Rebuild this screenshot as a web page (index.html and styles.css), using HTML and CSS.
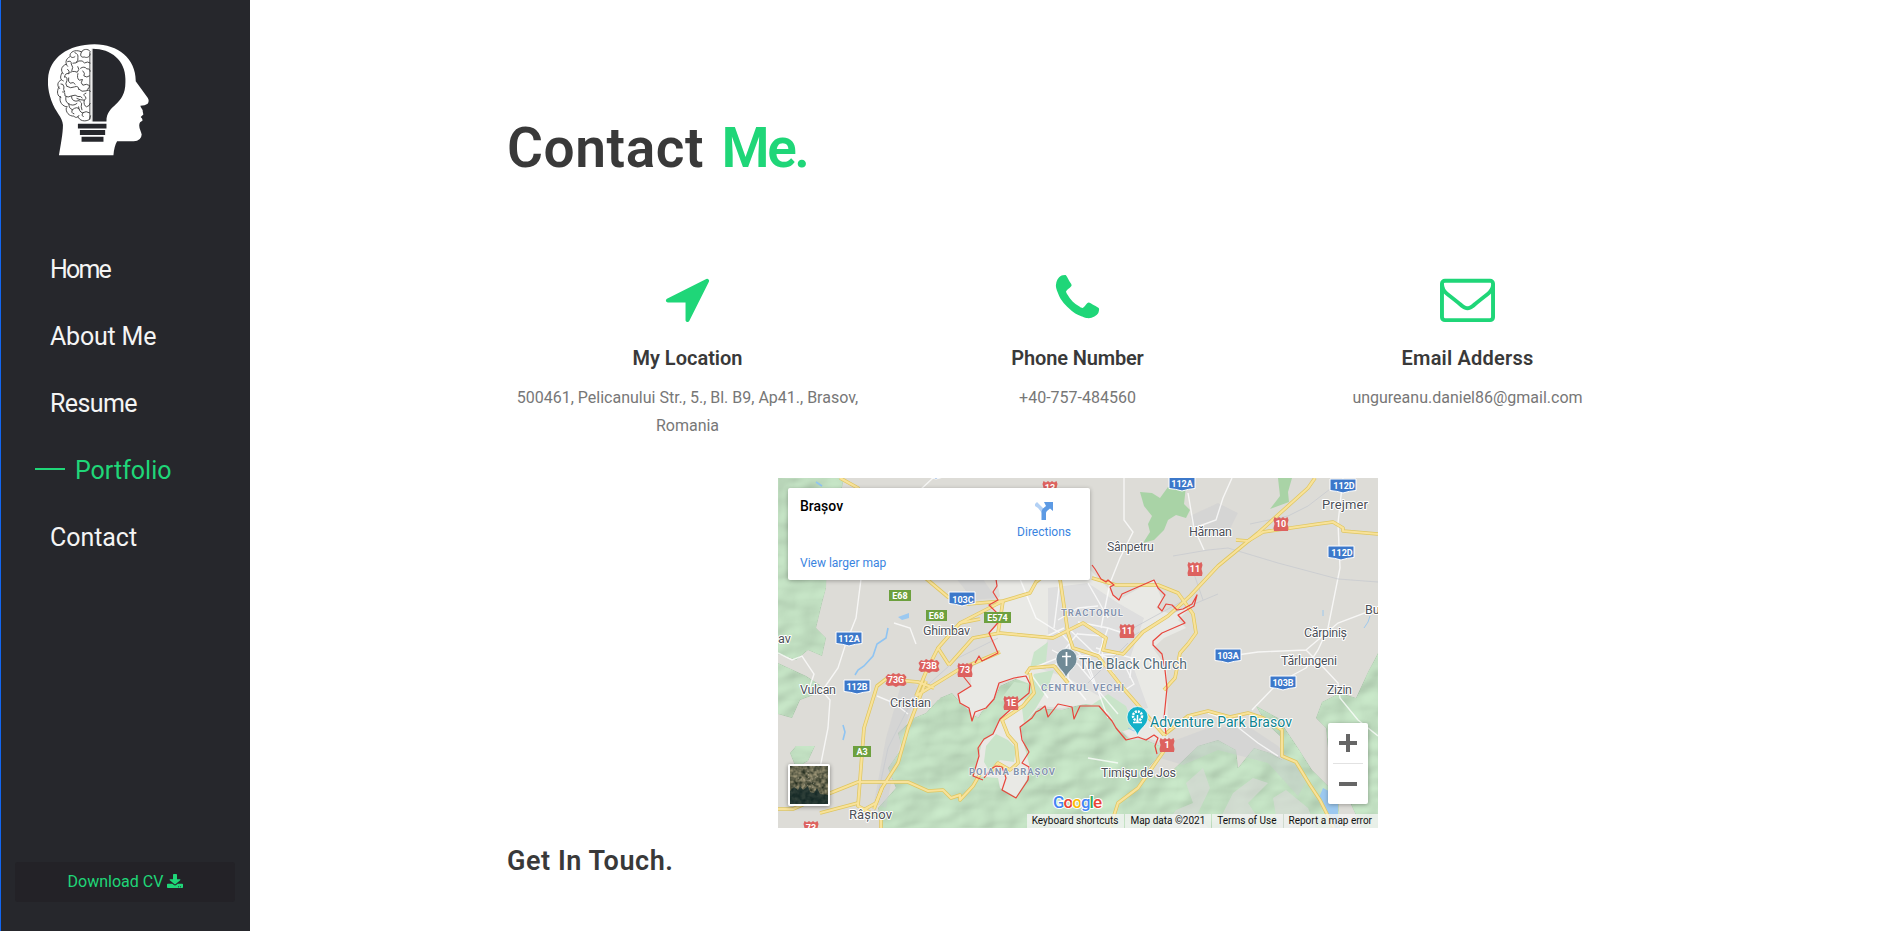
FILE: index.html
```html
<!DOCTYPE html>
<html lang="en">
<head>
<meta charset="utf-8">
<title>Contact Me</title>
<link rel="stylesheet" href="styles.css">
</head>
<body>
<aside class="sidebar">
  <svg class="logo" viewBox="144 131 304 335">
    <path fill="#fff" d="M177 465C182 435 189 400 189 374C188 350 166 335 154 300C144 272 143 250 144 235C148 172 204 131 284 131C356 131 409 176 408 242L444 292Q450 301 444 310Q436 316 422 316C423 324 431 328 429 332L431 342L423 350Q430 356 428 361Q418 366 419 372C417 382 424 392 426 402Q425 421 402 423L352 423Q343 438 341 465Z"/>
    <path fill="#26272c" d="M278 144C334 144 377 179 377 235V245C377 318 320 309 320 363H278ZM234 370H320V384H234ZM240 389H316V404H240ZM245 409H311V424H245Z"/>
    <path stroke="#aaa" stroke-width="1" d="M276 144V363"/>
    <g fill="none" stroke="#333" stroke-width="2.6" stroke-linecap="round">
      <path d="M271 152C264 142 248 146 245 154C233 147 214 149 210 163C212 171 219 173 225 168M210 168C196 175 195 188 203 197M198 191C183 197 181 210 190 220M186 217C179 230 181 238 190 241M184 238C172 243 170 256 179 264M177 259C169 274 172 287 183 291M181 288C176 304 188 319 202 319M199 322C196 335 208 348 222 347C229 355 235 349 237 345M234 348C238 362 256 365 269 357L272 346"/>
      <path d="M245 154C239 163 243 172 253 169C263 173 270 168 271 160M225 156Q236 160 234 171Q236 180 230 184M203 183Q215 178 214 190Q222 200 216 210M219 188Q229 189 237 181Q248 178 254 187Q263 181 271 187M203 206Q211 211 206 219Q195 217 194 229M206 219Q217 208 232 215Q241 207 234 198M234 219Q230 233 238 239L247 237M242 203Q253 195 261 205Q270 203 271 212M249 211Q257 218 252 226Q261 233 269 226M194 229Q203 228 201 240Q194 250 201 258M206 232Q203 244 211 248Q221 242 226 251M183 250Q191 249 192 259Q189 267 194 274M202 258Q212 265 224 259Q236 254 237 267M247 238Q240 248 249 254Q260 248 269 255Q270 263 262 267M237 266Q246 276 258 271Q267 266 272 272M188 274Q196 273 195 286Q204 293 215 286Q227 281 234 288Q243 286 247 292M198 289Q195 304 205 309Q219 319 231 309M215 288Q214 300 228 302Q239 296 244 306M258 278Q247 281 256 288Q263 294 253 299Q240 299 231 294M253 299Q250 315 260 319Q269 317 271 309M206 310Q206 324 217 328Q232 316 238 326M217 328Q212 338 222 340M236 319Q238 335 248 337Q259 330 269 337M245 309Q242 319 246 328M249 337Q242 345 250 349M270 154V356"/>
    </g>
  </svg>
  <nav class="menu">
    <a class="home">Home</a>
    <a class="about">About Me</a>
    <a class="resume">Resume</a>
    <a class="active">Portfolio</a>
    <a class="contact">Contact</a>
  </nav>
  <a class="download">Download CV
    <svg viewBox="0 0 512 512" preserveAspectRatio="none"><path fill="#1fd678" d="M216 0h80c13 0 24 11 24 24v168h88c18 0 27 21 14 34L270 378c-8 8-20 8-28 0L90 226c-13-13-4-34 14-34h88V24c0-13 11-24 24-24zm296 376v112c0 13-11 24-24 24H24c-13 0-24-11-24-24V376c0-13 11-24 24-24h147l49 49c20 20 52 20 72 0l49-49h147c13 0 24 11 24 24zm-124 88c0-11-9-20-20-20s-20 9-20 20 9 20 20 20 20-9 20-20zm64 0c0-11-9-20-20-20s-20 9-20 20 9 20 20 20 20-9 20-20z"/></svg>
  </a>
</aside>
<main class="content">
  <h1>Contact <span>Me.</span></h1>
  <section class="cards">
    <article>
      <svg class="icon" viewBox="0 0 1792 1792"><path d="M1593 349l-640 1280q-17 35-57 35-5 0-15-2-22-5-35.5-22.500t-13.500-39.500v-576h-576q-22 0-39.500-13.500t-22.500-35.500 4-42 29-30l1280-640q13-7 29-7 27 0 45 19 15 14 18.500 34.500t-6.500 39.500z"/></svg>
      <h2 class="t-loc">My Location</h2>
      <p>500461, Pelicanului Str., 5., Bl. B9, Ap41., Brasov, Romania</p>
    </article>
    <article>
      <svg class="icon" viewBox="0 0 1792 1792"><path d="M1600 1240q0 27-10 70.500t-21 68.500q-21 50-122 106-94 51-186 51-27 0-53-3.500t-57.500-12.500-47-14.500-55.500-20.500-49-18q-98-35-175-83-127-79-264-216t-216-264q-48-77-83-175-3-9-18-49t-20.500-55.500-14.500-47-12.500-57.500-3.500-53q0-92 51-186 56-101 106-122 25-11 68.500-21t70.500-10q14 0 21 3 18 6 53 76 11 19 30 54t35 63.500 31 53.500q3 4 17.500 25t21.500 35.500 7 28.500q0 20-28.500 50t-62 55-62 53-28.500 46q0 9 5 22.500t8.500 20.500 14 24 11.500 19q76 137 174 235t235 174q2 1 19 11.500t24 14 20.500 8.500 22.500 5q18 0 46-28.500t53-62 55-62 50-28.500q14 0 28.500 7t35.500 21.500 25 17.500q25 15 53.500 31t63.500 35 54 30q70 35 76 53 3 7 3 21z"/></svg>
      <h2 class="t-phone">Phone Number</h2>
      <p>+40-757-484560</p>
    </article>
    <article>
      <svg class="icon" viewBox="0 0 1792 1792"><path d="M1664 1504v-768q-32 36-69 66-268 206-426 338-51 43-83 67t-86.500 48.500-102.500 24.500h-2q-48 0-102.500-24.500t-86.500-48.500-83-67q-158-132-426-338-37-30-69-66v768q0 13 9.500 22.500t22.500 9.500h1472q13 0 22.500-9.500t9.500-22.500zm0-1051v-24.500l-.5-13-3-12.500-5.500-9-9-7.500-14-2.500h-1472q-13 0-22.500 9.500t-9.500 22.500q0 168 147 284 193 152 401 317 6 5 35 29.500t46 37.500 44.500 31.500 50.500 27.500 43 9h2q20 0 43-9t50.500-27.500 44.500-31.500 46-37.500 35-29.500q208-165 401-317 54-43 100.500-115.500t46.500-131.500zm128-37v1088q0 66-47 113t-113 47h-1472q-66 0-113-47t-47-113v-1088q0-66 47-113t113-47h1472q66 0 113 47t47 113z"/></svg>
      <h2 class="t-mail">Email Adderss</h2>
      <p>ungureanu.daniel86@gmail.com</p>
    </article>
  </section>
  <div class="map">
    <svg class="map-canvas" viewBox="0 0 600 350">
      <defs>
        <path id="shield" d="M-6.500-7L-4-5.500L-2-7L0-5.500L2-7L4-5.500L6.500-7L7.500-4L6.500 0L7.500 4L7 7H-7L-7.500 4L-6.500 0L-7.500-4Z"/>
        <path id="shield-wide" d="M-8-6L-5-5L-3-7L0-5.500L3-7L5-5L8-6L10.500-3L9 0L10.500 4L8 6L3 5.500L0 7L-3 5.500L-8 6L-10.500 4L-9 0L-10.500-3Z"/>
        <path id="county" d="M-13-7H13V4.500Q6 5 0 7Q-6 5-13 4.500Z"/>
        <filter id="relief" x="0" y="0" width="100%" height="100%" color-interpolation-filters="sRGB">
          <feTurbulence type="fractalNoise" baseFrequency=".03 .045" numOctaves="2" seed="4" result="n"/>
          <feDiffuseLighting in="n" surfaceScale="4" lighting-color="#fff" result="l"><feDistantLight azimuth="220" elevation="52"/></feDiffuseLighting>
          <feComposite in="SourceGraphic" in2="l" operator="arithmetic" k1=".36" k2=".71"/>
        </filter>
        <filter id="terrain" x="0" y="0" width="100%" height="100%" color-interpolation-filters="sRGB">
          <feTurbulence type="fractalNoise" baseFrequency=".25" numOctaves="3" seed="9"/>
          <feColorMatrix values=".7 0 0 0 .05  .6 0 0 0 .1  .5 0 0 0 .06  0 0 0 0 1"/>
        </filter>
      </defs>
      <rect width="600" height="350" fill="#dddcd7"/>
      <!-- forest and hills -->
      <g fill="#c1dfc1" filter="url(#relief)">
        <path d="M0 0H66L62 18L50 30L48 110L44 125L38 150L48 160L44 178L30 172L18 182L0 176ZM0 185L28 198L42 207L38 216L22 222L14 240L0 236ZM12 275L18 268L37 268L30 283L18 290Z"/>
        <path d="M105 350L100 330L118 310L110 290L124 270L120 255L136 240L148 235L160 222L176 218L190 232L200 240L206 230L216 222L222 208L240 200L254 198L256 210L254 230L284 232L308 225H325L336 240L342 252L352 262H368L382 268L384 274L370 290L378 300L395 292L420 268L440 262L458 272L460 290L476 270L492 275L505 282L502 258L488 245L478 228L500 240L520 270L534 292L560 318L562 350Z"/>
        <path d="M600 175L590 194L578 220L562 215L544 224L538 240L548 250L550 270L556 300L570 320L584 350H600Z"/>
        <path d="M162 220L174 215L180 222L173 232L160 230Z"/>
      </g>
      <path fill="#d9d9d7" d="M385 350L398 332L415 325L408 305L425 290L432 310L420 335L430 350ZM440 345L455 315L475 300L490 305L470 325L480 340ZM500 350L495 320L508 312L530 330L538 350Z" opacity=".65"/>
      <path fill="#a9d3a6" d="M362 14L374 15L382 20L390 9L408 8L406 26L412 32L408 40L398 37L390 42L386 52L376 62L365 65L372 54L370 46L374 38L366 28ZM500 0H514L510 14L511 24L492 31L502 18ZM319 150H328V154H319Z"/>
      <path fill="#cacbd0" opacity=".4" d="M390 265L430 250L470 248L500 268L530 300L520 318L490 285L440 272L405 287L376 278ZM96 325L108 260L125 200L140 208L118 280L108 330ZM178 100L200 94L218 120L195 122ZM412 38L440 25L460 35L450 55L420 60Z"/>
      <!-- city area -->
      <path fill="#e9e9e5" d="M218 100L222 118L212 130L224 140L211 155L220 175L203 184L192 190L193 208L180 216L182 225L191 230L194 240L208 230L216 221L221 205L236 200L252 206L250 220L240 224L222 241L215 256L204 264L196 298L220 300L222 310L238 319L250 300L252 290L242 250L262 228L284 230L308 226L322 228L336 244L352 260L370 260L390 268L389 190L375 170L386 160L408 150L400 142L416 126L392 136L378 130L384 122L376 102L340 122L330 110L310 90Z"/>
      <path fill="#d9dadb" opacity=".75" d="M270 110L310 105L340 125L366 140L352 180L370 230L350 235L290 200L260 190L270 160Z"/>
      <path fill="#c9e4c9" d="M208 268L218 256L230 262L238 270L236 284L222 282L212 294L206 284ZM222 222L236 204L250 206L248 220L234 226ZM256 174L270 164L268 184L252 190ZM244 230L256 196L276 192L270 210L258 230L246 246ZM312 228L330 216L348 228L356 250L342 254L330 234Z"/>
      <!-- water -->
      <path fill="#9cc9f0" d="M545 310L560 318V350H555L540 322ZM120 139L131 135V140L124 142Z"/>
      <g fill="none" stroke="#8fc4f2" stroke-width="1.600"><path d="M110 150L108 160L99 166L95 178L86 188L80 192L77 197M65 247L67 254L65 262M38 4L44 8"/><path stroke-width=".8" d="M350 250L356 253L364 250M592 138L590 144L586 150M545 132V138"/></g>
      <!-- minor roads -->
      <g fill="none" stroke="#fff" stroke-width="1.400" opacity=".75">
        <path d="M155 0L142 12M83 101L78 140L68 165L60 190L44 213L52 222L50 250L42 290M0 175L14 182L24 178L36 196L30 214M346 0V42L355 54L342 80L332 105L323 150M410 15L416 50L438 42L445 20L454 0M416 50L426 72M565 0L560 45L562 90L550 150L540 172L528 190M438 180L480 174L528 172L546 190L560 205L562 220L580 242L600 258M528 172L560 145L600 130M528 190L500 205L474 232M430 235L452 243L480 265L500 278M300 155L280 180L250 192L270 220M242 101L258 140L282 155M282 101L276 150M292 166L290 200L308 222M308 180L330 240M318 176L350 216M300 144L330 150L354 158M265 160L286 150M318 170L354 180L352 200M310 105L330 140M116 145L132 150L138 166M99 218L116 225L130 236M310 280L340 285"/>
        <path d="M284 156L305 180L318 210L340 236M290 150L315 174L350 188M274 172L300 186L320 210M300 156L325 158L324 188M268 190L300 178L340 176M330 150L320 178L336 196M280 142L300 130L320 128M346 186L356 206L344 214"/>
      </g>
      <path fill="none" stroke="#c8cacf" stroke-width=".8" d="M600 104L560 101L500 85L450 70L430 72L395 78M96 335L110 270L135 220L180 180L220 160M355 158L390 137L440 116M348 154L410 120M310 205L350 165M414 90L425 122M472 46L510 38L530 28L556 8"/>
      <!-- major roads -->
      <g fill="none" stroke="#dfc65f" stroke-width="3.600" stroke-linejoin="round">
        <path d="M62 0L80 10L110 82L145 98L170 119L190 126L225 123L252 115L258 104L278 88M0 331H15L40 320L80 304H130L150 313L165 312L173 320L182 317V322L195 308L202 296M171 187L195 160L222 155L275 160L305 145L328 160L325 172L345 176L365 154L390 138L412 118L440 88L480 55L530 10L537 0M171 187L160 170L182 145L202 141M80 335L98 325L104 310M42 335L80 325"/>
        <path d="M96 331L104 310L120 285L130 250L148 203M103 350V340L80 328L86 250L99 208L108 201L140 204L156 210M138 218L148 194L160 170M138 218L180 192L222 174M314 100L338 107L380 107L400 115L415 136L418 155L410 166L402 175L397 200L386 212M458 62L470 63L485 54L540 46L555 44L565 50V53L600 56"/>
        <path d="M386 257L410 238L430 233L452 239L470 235L485 240L504 252V278L518 284L532 307L542 322L556 350M386 257L345 210L320 178L295 170L290 155L282 101M388 270L360 310L340 325L332 350M248 196L252 190L276 188L290 205M252 195L256 215L245 228L224 242L230 257L238 266L240 285L232 292L220 285L213 294M225 123L220 155M182 145L225 123"/>
      </g>
      <g fill="none" stroke="#f8e29a" stroke-width="2.200" stroke-linejoin="round">
        <path d="M62 0L80 10L110 82L145 98L170 119L190 126L225 123L252 115L258 104L278 88M0 331H15L40 320L80 304H130L150 313L165 312L173 320L182 317V322L195 308L202 296M171 187L195 160L222 155L275 160L305 145L328 160L325 172L345 176L365 154L390 138L412 118L440 88L480 55L530 10L537 0M171 187L160 170L182 145L202 141M80 335L98 325L104 310M42 335L80 325"/>
        <path d="M96 331L104 310L120 285L130 250L148 203M103 350V340L80 328L86 250L99 208L108 201L140 204L156 210M138 218L148 194L160 170M138 218L180 192L222 174M314 100L338 107L380 107L400 115L415 136L418 155L410 166L402 175L397 200L386 212M458 62L470 63L485 54L540 46L555 44L565 50V53L600 56"/>
        <path d="M386 257L410 238L430 233L452 239L470 235L485 240L504 252V278L518 284L532 307L542 322L556 350M386 257L345 210L320 178L295 170L290 155L282 101M388 270L360 310L340 325L332 350M248 196L252 190L276 188L290 205M252 195L256 215L245 228L224 242L230 257L238 266L240 285L232 292L220 285L213 294M225 123L220 155M182 145L225 123"/>
      </g>
      <!-- city limits -->
      <path fill="none" stroke="#e8453c" stroke-width="1.200" stroke-linejoin="round" d="M314 87L317 91L323 101L328 104L330 102L336 107L332 109L335 117L341 122L344 116L376 102L380 110L387 117L384 122L380 129L384 133L388 126L394 127L399 132L405 131L414 126L419 117L416 128L400 137L407 145L384 155L375 163L375 167L384 176L387 192L389 210L386 240L388 256M218 101L219 108L215 114L220 122L211 127L224 140L211 155L220 175L204 183L201 178L197 185M185 198L193 208L180 216L182 225L191 230L194 243L197 234L208 230L216 221L221 205L236 200L248 198L252 206L251 215L240 224L232 232L222 241L215 256L206 261L200 270L201 278L195 298L205 302M206 300L213 291L218 288L224 289L228 300L224 312L238 320L250 302L251 289L244 285L251 274L244 262L242 249L254 240L258 234L262 232L267 228L270 239L280 226L294 229L296 241L302 228H321L334 243L338 250L348 262L360 259L368 262L376 257L380 260L377 268L379 276"/>
      <!-- road signs -->
      <g class="signs">
        <g fill="#dd625f">
          <use href="#shield" x="272" y="10"/><use href="#shield" x="417" y="91"/><use href="#shield" x="503" y="46"/><use href="#shield" x="349" y="153"/><use href="#shield-wide" x="151" y="188"/><use href="#shield-wide" x="118" y="202"/><use href="#shield" x="187" y="192"/><use href="#shield" x="233" y="225"/><use href="#shield" x="389" y="267"/><use href="#shield" x="33" y="350"/>
        </g>
        <g fill="#3c78ca" stroke="#fff">
          <use href="#county" x="404" y="6"/><use href="#county" x="565" y="8"/><use href="#county" x="563" y="75"/><use href="#county" x="184" y="121"/><use href="#county" x="71" y="161"/><use href="#county" x="79" y="209"/><use href="#county" x="450" y="178"/><use href="#county" x="505" y="205"/><use href="#county" x="158" y="-6"/>
        </g>
        <path fill="#6da03e" d="M111 112H133V123H111ZM148 132H169V143H148ZM206 134H233V145H206ZM75 268H93V279H75Z"/>
        <g class="sign-text">
          <text x="272" y="13">13</text><text x="417" y="94">11</text><text x="503" y="49">10</text><text x="349" y="156">11</text><text x="151" y="191">73B</text><text x="118" y="205">73G</text><text x="187" y="195">73</text><text x="233" y="228">1E</text><text x="389" y="270">1</text><text x="33" y="353">73</text>
          <text x="404" y="9">112A</text><text x="566" y="11">112D</text><text x="564" y="78">112D</text><text x="185" y="125">103C</text><text x="71" y="164">112A</text><text x="79" y="212">112B</text><text x="450" y="181">103A</text><text x="505" y="208">103B</text>
          <text x="122" y="121">E68</text><text x="158.500" y="141">E68</text><text x="219.500" y="143">E574</text><text x="84" y="277">A3</text>
        </g>
      </g>
      <!-- place names -->
      <g class="places">
        <text x="145" y="157" textLength="47">Ghimbav</text><text x="0" y="165">av</text>
        <text x="22" y="216" textLength="36">Vulcan</text><text x="112" y="229" textLength="41">Cristian</text>
        <text x="71" y="341" font-size="13" textLength="43">Râșnov</text>
        <text x="329" y="73" textLength="47">Sânpetru</text><text x="411" y="58" textLength="43">Hărman</text>
        <text x="544" y="31" font-size="13" textLength="46">Prejmer</text><text x="526" y="159" textLength="43">Cărpiniș</text>
        <text x="587" y="136">Bu</text><text x="503" y="187" textLength="56">Tărlungeni</text>
        <text x="549" y="216" textLength="25">Zizin</text><text x="323" y="299" textLength="75">Timişu de Jos</text>
        <text class="poi" x="301" y="191" textLength="108">The Black Church</text>
        <text class="park" x="372" y="249" textLength="142">Adventure Park Brasov</text>
        <g class="district"><text x="283" y="138" textLength="62">TRACTORUL</text><text x="263" y="213" textLength="83">CENTRUL VECHI</text><text x="191" y="297" textLength="86">POIANA BRAȘOV</text></g>
      </g>
      <path fill="#6f8a96" stroke="#fff" stroke-width=".7" d="M288 200C286 192 278 190 278 181A10.300 10.300 0 0 1 299 181C299 190 290 192 288 200Z"/>
      <path stroke="#fff" stroke-width="1.700" d="M288.500 174V188M284 178.500H293"/>
      <path fill="#14b1c9" stroke="#fff" stroke-width=".7" d="M359.500 258C358 250 349 248 349 239A10.300 10.300 0 0 1 370 239C370 248 361 250 359.500 258Z"/>
      <path fill="none" stroke="#fff" stroke-width="1.500" d="M355 244.500H364M359.500 237V244"/><circle cx="359.500" cy="238" r="4.500" fill="none" stroke="#fff" stroke-width="2.500" stroke-dasharray="2 1"/>
      <text class="google" x="275" y="330" textLength="49"><tspan fill="#4285f4">G</tspan><tspan fill="#ea4335">o</tspan><tspan fill="#fbbc05">o</tspan><tspan fill="#4285f4">g</tspan><tspan fill="#34a853">l</tspan><tspan fill="#ea4335">e</tspan></text>
    </svg>
    <div class="place-card">
      <div class="place-info"><strong>Brașov</strong><a>View larger map</a></div>
      <div class="directions">
        <svg viewBox="0 0 18 18"><path fill="#b3d1f5" d="M0 2L2 0L9 7L7 11L3 6L0 4Z"/><path fill="#5c9ae4" d="M6.500 18V10Q6.500 8 8 6.500L11 4L9 0H18V9L15 6.500L12 9Q11 10 11 11V18Z"/></svg>
        <a>Directions</a>
      </div>
    </div>
    <div class="satellite"><svg viewBox="0 0 38 38"><rect width="38" height="38" filter="url(#terrain)"/><path fill="#0c2425" opacity=".75" d="M0 25L4 21L8 24L10 20L13 24L18 20L20 26L24 27L27 22L30 28L38 29V38H0Z"/><path fill="none" stroke="#c5bda8" stroke-width="1" opacity=".6" stroke-dasharray="1 2" d="M18 5L19 15L26 19M8 12L19 15L30 9M14 18L24 22"/></svg></div>
    <div class="zoom"><span class="plus"></span><i></i><span class="minus"></span></div>
    <div class="credits"><span>Keyboard shortcuts</span><span>Map data ©2021</span><span>Terms of Use</span><span>Report a map error</span></div>
  </div>
  <h3>Get In Touch.</h3>
</main>
</body>
</html>
```

FILE: styles.css
```css
* { box-sizing: border-box; }
body {
  margin: 0;
  display: flex;
  height: 931px;
  overflow: hidden;
  background: #fff;
  font-family: Roboto, "Liberation Sans", sans-serif;
}
.sidebar {
  width: 250px;
  height: 931px;
  flex: none;
  display: flex;
  flex-direction: column;
  border-left: 1px solid #1266f1;
  background: #26272c;
}
.logo { width: 101px; height: 112px; margin: 44px 0 0 47px; flex: none; }
.menu { margin: 80px 0 0 49px; display: flex; flex-direction: column; }
.menu a {
  height: 67px;
  line-height: 67px;
  font-size: 25px;
  color: #f4f4f4;
  white-space: nowrap;
}
.menu .home { letter-spacing: -1.8px; }
.menu .about { letter-spacing: -.2px; }
.menu .resume { letter-spacing: -.6px; }
.menu .contact { letter-spacing: -.05px; }
.menu .active {
  display: flex;
  align-items: center;
  gap: 10px;
  margin-left: -15px;
  color: #1fd678;
}
.menu .active::before { content: ""; width: 30px; height: 2px; margin-bottom: 3px; background: #1fd678; }
.download {
  display: flex;
  align-items: center;
  justify-content: center;
  gap: 4px;
  width: 220px;
  height: 40px;
  margin: auto 0 29px 14px;
  padding: 0 0 2px 1px;
  border-radius: 3px;
  background: #232227;
  color: #1fd678;
  font-size: 16px;
}
.download svg { width: 16px; height: 14px; margin-top: -1px; }

.content { width: 1170px; margin: 0 0 0 242px; flex: none; }
h1, h2, h3, p { margin: 0; color: #393939; }
h1 {
  padding: 115px 0 0 15px;
  font-size: 55px;
  line-height: 66px;
  font-weight: 600;
  letter-spacing: .6px;
  word-spacing: 3px;
}
h1 span { color: #1fd678; letter-spacing: -2.4px; }
.cards { display: grid; grid-template-columns: repeat(3, 390px); margin: 90px 0 0 .5px; height: 207px; }
.cards article { padding: 0 15px; text-align: center; }
.icon { display: block; width: 55px; height: 55px; margin: 0 auto; fill: #1fd678; }
h2 { margin-top: 18px; font-size: 20px; line-height: 28px; font-weight: 600; }
.t-phone { letter-spacing: -.15px; }
.t-mail { letter-spacing: .2px; }
.cards p { margin-top: 12px; color: #777; font-size: 16px; line-height: 28px; }
h3 { padding: 14px 0 0 15px; font-size: 27px; line-height: 38px; font-weight: 600; letter-spacing: .55px; }

.map { position: relative; width: 600px; height: 350px; margin-left: 286px; overflow: hidden; }
.map-canvas { display: block; width: 600px; height: 350px; }
.signs { font: 700 9px Roboto, sans-serif; }
.sign-text { fill: #fff; text-anchor: middle; }
.places { font-size: 12.5px; fill: #4c4f57; stroke: #fff; stroke-width: 2px; paint-order: stroke; stroke-linejoin: round; }
.places .poi { font-size: 14px; fill: #536c79; }
.places .park { font-size: 14px; fill: #0e838f; }
.district { font-size: 9.5px; font-weight: 700; fill: #8493ae; stroke-width: 1px; }
.google { font-size: 17px; font-weight: 500; stroke: #fff; stroke-width: 2px; paint-order: stroke; }
.place-card {
  position: absolute;
  left: 10px;
  top: 10px;
  width: 302px;
  height: 92px;
  display: flex;
  justify-content: space-between;
  padding: 10px 19px 9px 12px;
  border-radius: 2px;
  background: #fff;
  box-shadow: 0 1px 4px rgba(0, 0, 0, .3);
  font-size: 12px;
}
.place-info { display: flex; flex-direction: column; justify-content: space-between; }
.place-info strong { font-size: 14px; font-weight: 500; line-height: 16px; }
.place-card a { color: #3a84df; line-height: 16px; }
.directions { display: flex; flex-direction: column; align-items: center; }
.directions svg { width: 18px; height: 18px; margin: 4px 0 4px; }
.satellite {
  position: absolute;
  left: 10px;
  top: 286px;
  width: 42px;
  height: 42px;
  border: 2px solid #fff;
  border-radius: 2px;
  box-shadow: 0 1px 4px rgba(0, 0, 0, .4);
}
.satellite svg { display: block; width: 38px; height: 38px; }
.zoom {
  position: absolute;
  right: 10px;
  top: 245px;
  width: 40px;
  height: 81px;
  display: grid;
  grid-template-rows: 40px 1px 40px;
  place-items: center;
  border-radius: 2px;
  background: #fff;
  box-shadow: 0 1px 4px rgba(0, 0, 0, .3);
}
.zoom i { width: 30px; height: 1px; background: #e2e2e2; }
.plus { width: 18px; height: 18px; background: linear-gradient(#666, #666) center / 18px 4px no-repeat, linear-gradient(#666, #666) center / 4px 18px no-repeat; }
.minus { width: 18px; height: 4px; background: #666; }
.credits {
  position: absolute;
  right: 0;
  bottom: 0;
  height: 14px;
  display: flex;
  font-size: 10px;
  line-height: 14px;
  color: #111;
}
.credits span { padding: 0 6px 0 5px; margin-left: 1px; background: rgba(245, 245, 245, .75); white-space: nowrap; }
```
